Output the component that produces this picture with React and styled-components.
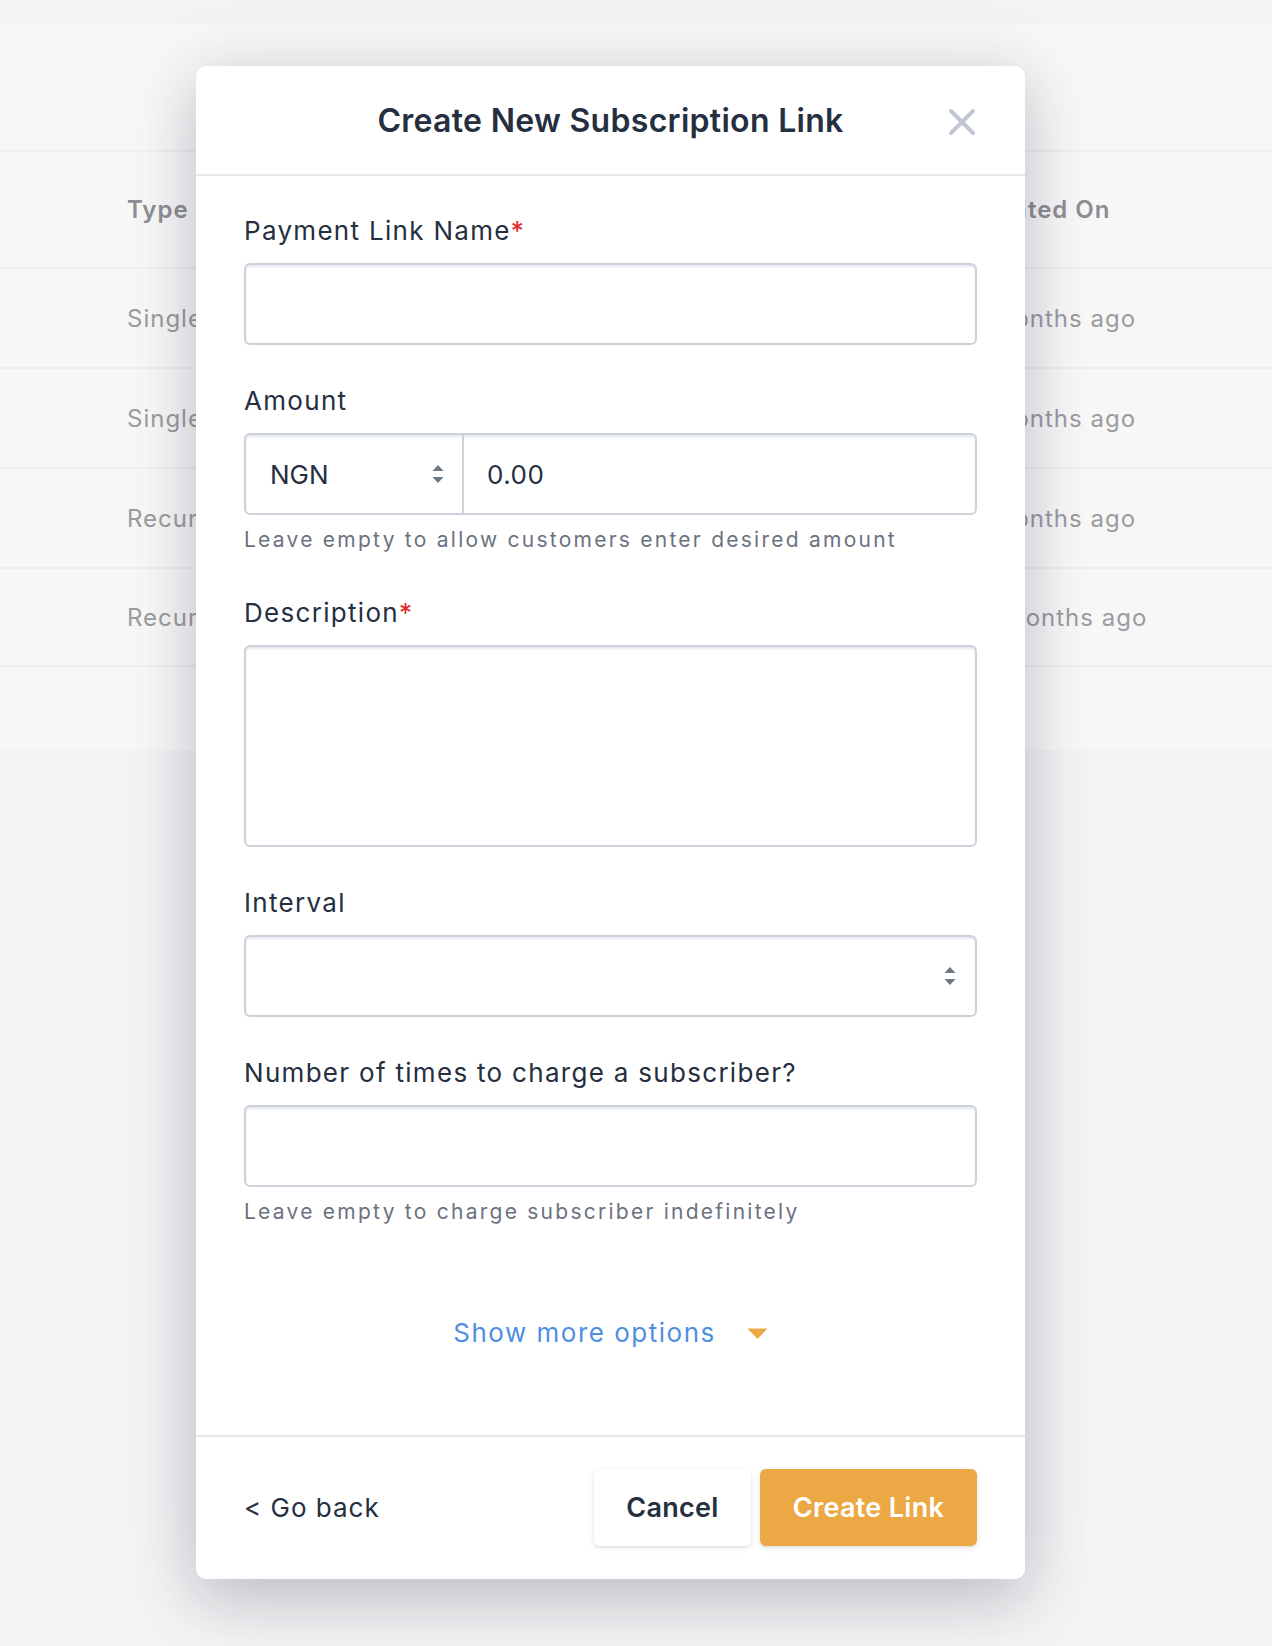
import React from "react";
import styled, { createGlobalStyle } from "styled-components";

const Global = createGlobalStyle`
  html, body { margin: 0; padding: 0; }
  body {
    background: #f3f3f5;
    font-family: Inter, "Noto Sans", "Liberation Sans", sans-serif;
    -webkit-font-smoothing: antialiased;
  }
  * { box-sizing: border-box; }
`;

const Page = styled.div`
  position: relative;
  width: 1272px;
  min-height: 1646px;
  background: #f3f3f5;
  padding-top: 24px;
`;

const Card = styled.div`
  background: #f8f7f8;
  height: 726px;
  padding-top: 126px;
`;

const Row = styled.div`
  display: grid;
  grid-template-columns: 127px 842px 1fr;
  align-items: center;
  height: ${(p) => (p.$head ? "117px" : "100px")};
  border-top: 2px solid #efeef0;
  border-bottom: ${(p) => (p.$last ? "2px solid #efeef0" : "none")};
  color: ${(p) => (p.$head ? "#8e8e94" : "#9b9ba1")};
  font-size: 24px;
  font-weight: ${(p) => (p.$head ? 600 : 400)};
  letter-spacing: 1px;
`;

const Cell = styled.div`
  grid-column: ${(p) => p.$col};
  white-space: nowrap;
`;

const Modal = styled.div`
  position: absolute;
  top: 66px;
  left: 196px;
  width: 829px;
  background: #ffffff;
  border-radius: 10px;
  box-shadow: 0 24px 60px rgba(20, 20, 40, 0.17), 0 0 70px rgba(20, 20, 40, 0.1);
  display: flex;
  flex-direction: column;
`;

const Header = styled.div`
  position: relative;
  height: 110px;
  display: flex;
  align-items: center;
  justify-content: center;
  border-bottom: 2px solid #e5e7eb;
`;

const Title = styled.h2`
  margin: 0;
  font-size: 32px;
  font-weight: 600;
  color: #252f3f;
  letter-spacing: 0.3px;
`;

const CloseButton = styled.button`
  position: absolute;
  right: 49px;
  top: 42px;
  width: 28px;
  height: 28px;
  padding: 0;
  border: none;
  background: transparent;
  display: flex;
  align-items: center;
  justify-content: center;
`;

const Body = styled.div`
  padding: 39px 48px 86px;
  display: flex;
  flex-direction: column;
`;

const Field = styled.div`
  display: flex;
  flex-direction: column;
  margin-bottom: ${(p) => p.$mb || "40px"};
`;

const Label = styled.label`
  font-size: 26px;
  line-height: 32px;
  color: #252f3f;
  letter-spacing: 1.3px;
  margin-bottom: 16px;
`;

const Req = styled.span`
  color: #e02424;
`;

const Box = styled.div`
  height: ${(p) => p.$h || "82px"};
  border: 2px solid #cdd2da;
  border-radius: 6px;
  box-shadow: inset 0 2px 2px rgba(180, 188, 200, 0.35);
  background: #fff;
  display: flex;
  align-items: center;
  position: relative;
`;

const Group = styled(Box)`
  align-items: stretch;
`;

const Currency = styled.div`
  width: 218px;
  border-right: 2px solid #cdd2da;
  display: flex;
  align-items: center;
  justify-content: space-between;
  padding: 0 17px 0 24px;
  font-size: 26px;
  color: #252f3f;
`;

const AmountValue = styled.div`
  flex: 1;
  display: flex;
  align-items: center;
  padding-left: 23px;
  font-size: 26px;
  color: #252f3f;
  letter-spacing: 0.5px;
`;

const SelectArrows = styled.span`
  display: flex;
  margin-left: auto;
  margin-right: ${(p) => p.$mr || "0"};
`;

const Help = styled.div`
  font-size: 21px;
  line-height: 28px;
  color: #6b7280;
  letter-spacing: 2.25px;
  margin-top: 11px;
`;

const MoreRow = styled.div`
  display: flex;
  align-items: center;
  justify-content: center;
  gap: 31px;
  margin-top: 91px;
`;

const MoreLink = styled.span`
  font-size: 26px;
  line-height: 32px;
  color: #4f8fe0;
  letter-spacing: 1.5px;
`;

const Footer = styled.div`
  border-top: 2px solid #e5e7eb;
  padding: 32px 48px 33px;
  display: flex;
  align-items: center;
`;

const Back = styled.span`
  font-size: 26px;
  color: #252f3f;
  letter-spacing: 1px;
`;

const Actions = styled.div`
  margin-left: auto;
  display: flex;
  gap: 9px;
`;

const Button = styled.button`
  height: 77px;
  width: ${(p) => p.$w};
  border: none;
  border-radius: 6px;
  font-family: inherit;
  font-size: 27px;
  font-weight: 600;
  letter-spacing: 0.3px;
  background: ${(p) => (p.$primary ? "#eba844" : "#ffffff")};
  color: ${(p) => (p.$primary ? "#ffffff" : "#252f3f")};
  box-shadow: 0 2px 6px rgba(0, 0, 0, 0.1), 0 1px 2px rgba(0, 0, 0, 0.06);
`;

const UpDown = () => (
  <svg width="14" height="22" viewBox="0 0 14 22">
    <path d="M7 2 L12.5 8 H1.5 Z" fill="#6b7785" />
    <path d="M7 20 L12.5 14 H1.5 Z" fill="#6b7785" />
  </svg>
);

const rows = [
  ["Single", "2 months ago"],
  ["Single", "2 months ago"],
  ["Recurring", "2 months ago"],
  ["Recurring", "10 months ago"],
];

export default function App() {
  return (
    <>
      <Global />
      <Page>
        <Card>
          <Row $head>
            <Cell $col={2}>Type</Cell>
            <Cell $col={3}>Created On</Cell>
          </Row>
          {rows.map((r, i) => (
            <Row key={i} $last={i === rows.length - 1}>
              <Cell $col={2}>{r[0]}</Cell>
              <Cell $col={3}>{r[1]}</Cell>
            </Row>
          ))}
        </Card>

        <Modal>
          <Header>
            <Title>Create New Subscription Link</Title>
            <CloseButton aria-label="Close">
              <svg width="28" height="28" viewBox="0 0 28 28">
                <path d="M3 3 L25 25 M25 3 L3 25" stroke="#c0c6d2" strokeWidth="4" strokeLinecap="round" />
              </svg>
            </CloseButton>
          </Header>

          <Body>
            <Field>
              <Label>
                Payment Link Name<Req>*</Req>
              </Label>
              <Box />
            </Field>

            <Field $mb="43px">
              <Label>Amount</Label>
              <Group>
                <Currency>
                  NGN
                  <UpDown />
                </Currency>
                <AmountValue>0.00</AmountValue>
              </Group>
              <Help>Leave empty to allow customers enter desired amount</Help>
            </Field>

            <Field>
              <Label>
                Description<Req>*</Req>
              </Label>
              <Box $h="202px" />
            </Field>

            <Field>
              <Label>Interval</Label>
              <Box>
                <SelectArrows $mr="18px">
                  <UpDown />
                </SelectArrows>
              </Box>
            </Field>

            <Field $mb="0">
              <Label>Number of times to charge a subscriber?</Label>
              <Box />
              <Help>Leave empty to charge subscriber indefinitely</Help>
            </Field>

            <MoreRow>
              <MoreLink>Show more options</MoreLink>
              <svg width="21" height="11" viewBox="0 0 21 11">
                <path d="M0.5 0.5 H20.5 L11.5 10 Q10.5 11 9.5 10 Z" fill="#eba844" />
              </svg>
            </MoreRow>
          </Body>

          <Footer>
            <Back>&lt; Go back</Back>
            <Actions>
              <Button $w="157px">Cancel</Button>
              <Button $w="217px" $primary>
                Create Link
              </Button>
            </Actions>
          </Footer>
        </Modal>
      </Page>
    </>
  );
}
